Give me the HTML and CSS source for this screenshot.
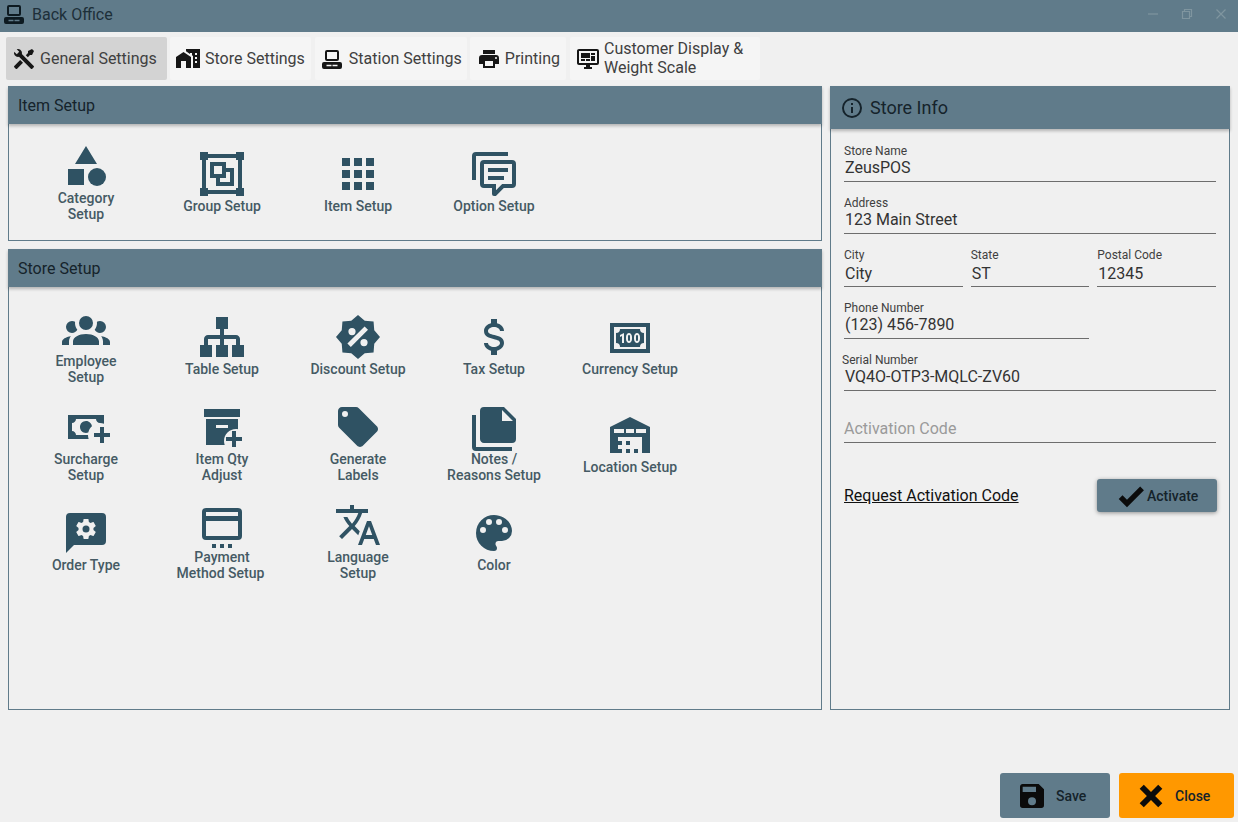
FILE: index.html
```html
<!DOCTYPE html>
<html lang="en">
<head>
<meta charset="utf-8">
<title>Back Office</title>
<link rel="stylesheet" href="styles.css">
</head>
<body>
<svg class="defs" width="0" height="0" aria-hidden="true">
  <symbol id="i-station" viewBox="0 0 24 24"><path fill-rule="evenodd" d="M7 3H17A2 2 0 0 1 19 5V12A2 2 0 0 1 17 14H7A2 2 0 0 1 5 12V5A2 2 0 0 1 7 3ZM7 5V12H17V5H7ZM4 15H20A2 2 0 0 1 22 17V20A2 2 0 0 1 20 22H4A2 2 0 0 1 2 20V17A2 2 0 0 1 4 15ZM6.5 17.7V19.3H11.5V17.7H6.5ZM12.5 17.7V19.3H17.5V17.7H12.5Z"/></symbol>
</svg>

<header class="titlebar">
  <div class="titlebar-left">
    <svg class="icon-24 title-icon"><use href="#i-station"/></svg>
    <span class="title-text">Back Office</span>
  </div>
  <div class="win-controls">
    <svg class="win-btn" viewBox="0 0 12 12"><path d="M1 6H11"/></svg>
    <svg class="win-btn" viewBox="0 0 12 12"><path d="M1.5 3.5H8.5V10.5H1.5ZM3.5 3.5V1.5H10.5V8.5H8.5"/></svg>
    <svg class="win-btn" viewBox="0 0 12 12"><path d="M1.5 1.5L10.5 10.5M10.5 1.5L1.5 10.5"/></svg>
  </div>
</header>

<nav class="tabs">
  <div class="tab tab-active">
    <svg class="icon-24" viewBox="0 0 24 24"><path d="M21.71 20.29L20.29 21.71A1 1 0 0 1 18.88 21.71L7 9.85A3.81 3.81 0 0 1 6 10A4 4 0 0 1 2.22 4.7L4.76 7.24L5.29 6.71L6.71 5.29L7.24 4.76L4.7 2.22A4 4 0 0 1 10 6A3.81 3.81 0 0 1 9.85 7L21.71 18.88A1 1 0 0 1 21.71 20.29M2.29 18.88A1 1 0 0 0 2.29 20.29L3.71 21.71A1 1 0 0 0 5.12 21.71L11 15.83L8.17 13M20 2L16 4V6L13.83 8.17L15.83 10.17L18 8H20L22 4Z"/></svg>
    <span>General Settings</span>
  </div>
  <div class="tab tab-store">
    <svg class="icon-24" viewBox="0 0 24 24"><path fill-rule="evenodd" d="M0 21V10L7.5 5L15 10V21H10V14H5V21H0ZM24 2V21H17V8.93L16 8.27V6H14V6.93L10 4.26V2H24ZM21 14H19V16H21V14ZM21 10H19V12H21V10ZM21 6H19V8H21V6Z"/></svg>
    <span>Store Settings</span>
  </div>
  <div class="tab tab-station">
    <svg class="icon-24"><use href="#i-station"/></svg>
    <span>Station Settings</span>
  </div>
  <div class="tab tab-print">
    <svg class="icon-24" viewBox="0 0 24 24"><path d="M18,3H6V7H18M19,12A1,1 0 0,1 18,11A1,1 0 0,1 19,10A1,1 0 0,1 20,11A1,1 0 0,1 19,12M16,19H8V14H16M19,8H5A3,3 0 0,0 2,11V17H6V21H18V17H22V11A3,3 0 0,0 19,8Z"/></svg>
    <span>Printing</span>
  </div>
  <div class="tab tab-display">
    <svg class="icon-24" viewBox="0 0 24 24"><path d="M21,16V4H3V16H21M21,2A2,2 0 0,1 23,4V16A2,2 0 0,1 21,18H14V20H16V22H8V20H10V18H3C1.89,18 1,17.1 1,16V4C1,2.89 1.89,2 3,2H21M5,6H14V11H5V6M15,6H19V8H15V6M19,9V14H15V9H19M5,12H9V14H5V12M10,12H14V14H10V12Z"/></svg>
    <span class="tab-two-line">Customer Display &amp;<br>Weight Scale</span>
  </div>
</nav>

<main class="content">
  <div class="left-col">
    <section class="panel panel-item">
      <h2 class="panel-head">Item Setup</h2>
      <div class="grid">
        <div class="cell">
          <svg class="icon-48" viewBox="0 0 24 24"><path d="M12 2l-5.5 9h11zM3 13.5h8v8H3z"/><circle cx="17.5" cy="17.5" r="4.5"/></svg>
          <span class="label">Category<br>Setup</span>
        </div>
        <div class="cell cell-single">
          <svg class="icon-48" viewBox="0 0 24 24"><path d="M1,1V5H2V19H1V23H5V22H19V23H23V19H22V5H23V1H19V2H5V1M5,4H19V5H20V19H19V20H5V19H4V5H5M6,6V14H9V18H18V9H14V6M8,8H12V12H8M14,11H16V16H11V14H14"/></svg>
          <span class="label">Group Setup</span>
        </div>
        <div class="cell cell-single">
          <svg class="icon-48" viewBox="0 0 24 24"><path d="M4 8h4V4H4v4zm6 12h4v-4h-4v4zm-6 0h4v-4H4v4zm0-6h4v-4H4v4zm6 0h4v-4h-4v4zm6-10v4h4V4h-4zm-6 4h4V4h-4v4zm6 6h4v-4h-4v4zm0 6h4v-4h-4v4z"/></svg>
          <span class="label">Item Setup</span>
        </div>
        <div class="cell cell-single">
          <svg class="icon-48" viewBox="0 0 24 24"><path d="M12,23A1,1 0 0,1 11,22V19H7A2,2 0 0,1 5,17V7A2,2 0 0,1 7,5H21A2,2 0 0,1 23,7V17A2,2 0 0,1 21,19H16.9L13.2,22.71C13,22.89 12.76,23 12.5,23H12M13,17V20.08L16.08,17H21V7H7V17H13M3,15H1V3A2,2 0 0,1 3,1H19V3H3V15M9,9H19V11H9V9M9,13H17V15H9V13Z"/></svg>
          <span class="label">Option Setup</span>
        </div>
      </div>
    </section>

    <section class="panel panel-store">
      <h2 class="panel-head">Store Setup</h2>
      <div class="grid">
        <div class="cell">
          <svg class="icon-48" viewBox="0 0 24 24"><path d="M12,5.5A3.5,3.5 0 0,1 15.5,9A3.5,3.5 0 0,1 12,12.5A3.5,3.5 0 0,1 8.5,9A3.5,3.5 0 0,1 12,5.5M5,8C5.56,8 6.08,8.15 6.53,8.42C6.38,9.85 6.8,11.27 7.66,12.38C7.16,13.34 6.16,14 5,14A3,3 0 0,1 2,11A3,3 0 0,1 5,8M19,8A3,3 0 0,1 22,11A3,3 0 0,1 19,14C17.84,14 16.84,13.34 16.34,12.38C17.2,11.27 17.62,9.85 17.47,8.42C17.92,8.15 18.44,8 19,8M5.5,18.25C5.5,16.18 8.41,14.5 12,14.5C15.59,14.5 18.5,16.18 18.5,18.25V20H5.5V18.25M0,20V18.5C0,17.11 1.89,15.94 4.45,15.6C3.86,16.28 3.5,17.22 3.5,18.25V20H0M24,20H20.5V18.25C20.5,17.22 20.14,16.28 19.55,15.6C22.11,15.94 24,17.11 24,18.5V20Z"/></svg>
          <span class="label">Employee<br>Setup</span>
        </div>
        <div class="cell cell-single">
          <svg class="icon-48" viewBox="0 0 24 24"><path d="M9,2V8H11V11H5C3.89,11 3,11.89 3,13V16H1V22H7V16H5V13H11V16H9V22H15V16H13V13H19V16H17V22H23V16H21V13C21,11.89 20.1,11 19,11H13V8H15V2H9Z"/></svg>
          <span class="label">Table Setup</span>
        </div>
        <div class="cell cell-single">
          <svg class="icon-48" viewBox="0 0 24 24"><path fill-rule="evenodd" d="M23 12L20.13 15.37L19.78 19.78L15.37 20.13L12 23L8.63 20.13L4.22 19.78L3.87 15.37L1 12L3.87 8.63L4.22 4.22L8.63 3.87L12 1L15.37 3.87L19.78 4.22L20.13 8.63ZM9 7.5A1.8 1.8 0 1 0 9 11.1A1.8 1.8 0 1 0 9 7.5ZM15 13A1.8 1.8 0 1 0 15 16.6A1.8 1.8 0 1 0 15 13ZM8.4 17L17 8.4L15.3 6.7L6.7 15.3Z"/></svg>
          <span class="label">Discount Setup</span>
        </div>
        <div class="cell cell-single">
          <svg class="icon-48" viewBox="0 0 24 24"><path d="M7,15H9C9,16.08 10.37,17 12,17C13.63,17 15,16.08 15,15C15,13.9 13.96,13.5 11.76,12.97C9.64,12.44 7,11.78 7,9C7,7.21 8.47,5.69 10.5,5.18V3H13.5V5.18C15.53,5.69 17,7.21 17,9H15C15,7.92 13.63,7 12,7C10.37,7 9,7.92 9,9C9,10.1 10.04,10.5 12.24,11.03C14.36,11.56 17,12.22 17,15C17,16.79 15.53,18.31 13.5,18.82V21H10.5V18.82C8.47,18.31 7,16.79 7,15Z"/></svg>
          <span class="label">Tax Setup</span>
        </div>
        <div class="cell cell-single">
          <svg class="icon-48" viewBox="0 0 24 24"><path d="M2,5H22V20H2V5M20,18V7H4V18H20M17,8A2,2 0 0,0 19,10V15A2,2 0 0,0 17,17H7A2,2 0 0,0 5,15V10A2,2 0 0,0 7,8H17M17,13V12C17,10.9 16.33,10 15.5,10C14.67,10 14,10.9 14,12V13C14,14.1 14.67,15 15.5,15C16.33,15 17,14.1 17,13M15.5,11A0.5,0.5 0 0,1 16,11.5V13.5A0.5,0.5 0 0,1 15.5,14A0.5,0.5 0 0,1 15,13.5V11.5A0.5,0.5 0 0,1 15.5,11M13,13V12C13,10.9 12.33,10 11.5,10C10.67,10 10,10.9 10,12V13C10,14.1 10.67,15 11.5,15C12.33,15 13,14.1 13,13M11.5,11A0.5,0.5 0 0,1 12,11.5V13.5A0.5,0.5 0 0,1 11.5,14A0.5,0.5 0 0,1 11,13.5V11.5A0.5,0.5 0 0,1 11.5,11M8,15H9V10L7,11V12L8,11.5V15Z"/></svg>
          <span class="label">Currency Setup</span>
        </div>

        <div class="cell">
          <svg class="icon-48" viewBox="0 0 24 24"><path d="M3 6V18H13.32C13.1 17.33 13 16.66 13 16H7C7 14.9 6.11 14 5 14V10C6.11 10 7 9.11 7 8H17C17 9.11 17.9 10 19 10V10.06C19.67 10.06 20.34 10.18 21 10.4V6H3M12 9C10.3 9.03 9 10.3 9 12S10.3 14.97 12 15C12.38 15 12.77 14.92 13.14 14.77C13.41 13.67 13.86 12.63 14.97 11.61C14.85 10.28 13.59 8.97 12 9M19 12V15H16V17H19V20H21V17H24V15H21V12H19Z"/></svg>
          <span class="label">Surcharge<br>Setup</span>
        </div>
        <div class="cell">
          <svg class="icon-48" viewBox="0 0 24 24"><path fill-rule="evenodd" d="M3 3H21V7H3V3ZM4 8H20V13.1C19.67 13.04 19.34 13 19 13C15.69 13 13 15.69 13 19C13 19.7 13.13 20.37 13.35 21H4V8ZM9 11V12.5H15V11H9Z"/><path d="M17 14H19V17H22V19H19V22H17V19H14V17H17V14Z"/></svg>
          <span class="label">Item Qty<br>Adjust</span>
        </div>
        <div class="cell">
          <svg class="icon-48" viewBox="0 0 24 24"><path d="M5.5,7A1.5,1.5 0 0,1 4,5.5A1.5,1.5 0 0,1 5.5,4A1.5,1.5 0 0,1 7,5.5A1.5,1.5 0 0,1 5.5,7M21.41,11.58L12.41,2.58C12.05,2.22 11.55,2 11,2H4C2.89,2 2,2.89 2,4V11C2,11.55 2.22,12.05 2.59,12.41L11.58,21.41C11.95,21.77 12.45,22 13,22C13.55,22 14.05,21.77 14.41,21.41L21.41,14.41C21.78,14.05 22,13.55 22,13C22,12.44 21.77,11.94 21.41,11.58Z"/></svg>
          <span class="label">Generate<br>Labels</span>
        </div>
        <div class="cell">
          <svg class="icon-48" viewBox="0 0 24 24"><path d="M16,9H21.5L16,3.5V9M7,2H17L23,8V18A2,2 0 0,1 21,20H7C5.89,20 5,19.1 5,18V4A2,2 0 0,1 7,2M3,6V22H21V24H3A2,2 0 0,1 1,22V6H3Z"/></svg>
          <span class="label">Notes /<br>Reasons Setup</span>
        </div>
        <div class="cell cell-single">
          <svg class="icon-48" viewBox="0 0 24 24"><path fill-rule="evenodd" d="M12 3L2 8V21H6V13H18V21H22V8L12 3ZM4 9V11H9V9H4ZM10 9V11H14V9H10ZM15 9V11H20V9H15Z"/><path d="M6 15H8V17H6ZM10 15H12V17H10ZM6 19H8V21H6ZM10 19H12V21H10ZM14 19H16V21H14Z"/></svg>
          <span class="label">Location Setup</span>
        </div>

        <div class="cell cell-single">
          <svg class="icon-48" viewBox="0 0 24 24"><path d="M4 2H20A2 2 0 0 1 22 4V16A2 2 0 0 1 20 18H6L2 22V4A2 2 0 0 1 4 2Z"/><g class="gear" transform="translate(6 4) scale(.5)"><path d="M19.43,12.97C19.47,12.65 19.5,12.33 19.5,12C19.5,11.67 19.47,11.34 19.43,11L21.54,9.37C21.73,9.22 21.78,8.95 21.66,8.73L19.66,5.27C19.54,5.05 19.27,4.96 19.05,5.05L16.56,6.05C16.04,5.66 15.5,5.32 14.87,5.07L14.5,2.42C14.46,2.18 14.25,2 14,2H10C9.75,2 9.54,2.18 9.5,2.42L9.13,5.07C8.5,5.32 7.96,5.66 7.44,6.05L4.95,5.05C4.73,4.96 4.46,5.05 4.34,5.27L2.34,8.73C2.21,8.95 2.27,9.22 2.46,9.37L4.57,11C4.53,11.34 4.5,11.67 4.5,12C4.5,12.33 4.53,12.65 4.57,12.97L2.46,14.63C2.27,14.78 2.21,15.05 2.34,15.27L4.34,18.73C4.46,18.95 4.73,19.03 4.95,18.95L7.44,17.94C7.96,18.34 8.5,18.68 9.13,18.93L9.5,21.58C9.54,21.82 9.75,22 10,22H14C14.25,22 14.46,21.82 14.5,21.58L14.87,18.93C15.5,18.67 16.04,18.34 16.56,17.94L19.05,18.95C19.27,19.03 19.54,18.95 19.66,18.73L21.66,15.27C21.78,15.05 21.73,14.78 21.54,14.63L19.43,12.97Z"/></g><circle cx="12" cy="10" r="1.75"/></svg>
          <span class="label">Order Type</span>
        </div>
        <div class="cell">
          <svg class="icon-48" viewBox="0 0 24 24"><path fill-rule="evenodd" d="M4 3.5H20A2 2 0 0 1 22 5.5V17.5A2 2 0 0 1 20 19.5H4A2 2 0 0 1 2 17.5V5.5A2 2 0 0 1 4 3.5ZM4 5.5V7.5H20V5.5H4ZM4 10V17.5H20V10H4ZM7 21.5H9V23.5H7V21.5ZM11 21.5H13V23.5H11V21.5ZM15 21.5H17V23.5H15V21.5Z"/></svg>
          <span class="label">Payment<br><span class="nudge">Method Setup</span></span>
        </div>
        <div class="cell">
          <svg class="icon-48" viewBox="0 0 24 24"><path d="M12.87,15.07L10.33,12.56L10.36,12.53C12.1,10.59 13.34,8.36 14.07,6H17V4H10V2H8V4H1V6H12.17C11.5,7.92 10.44,9.75 9,11.35C8.07,10.32 7.3,9.19 6.69,8H4.69C5.42,9.63 6.42,11.17 7.67,12.56L2.58,17.58L4,19L9,14L12.11,17.11L12.87,15.07M18.5,10H16.5L12,22H14L15.12,19H19.87L21,22H23L18.5,10M15.88,17L17.5,12.67L19.12,17H15.88Z"/></svg>
          <span class="label">Language<br>Setup</span>
        </div>
        <div class="cell cell-single">
          <svg class="icon-48" viewBox="0 0 24 24"><path d="M17.5,12A1.5,1.5 0 0,1 16,10.5A1.5,1.5 0 0,1 17.5,9A1.5,1.5 0 0,1 19,10.5A1.5,1.5 0 0,1 17.5,12M14.5,8A1.5,1.5 0 0,1 13,6.5A1.5,1.5 0 0,1 14.5,5A1.5,1.5 0 0,1 16,6.5A1.5,1.5 0 0,1 14.5,8M9.5,8A1.5,1.5 0 0,1 8,6.5A1.5,1.5 0 0,1 9.5,5A1.5,1.5 0 0,1 11,6.5A1.5,1.5 0 0,1 9.5,8M6.5,12A1.5,1.5 0 0,1 5,10.5A1.5,1.5 0 0,1 6.5,9A1.5,1.5 0 0,1 8,10.5A1.5,1.5 0 0,1 6.5,12M12,3A9,9 0 0,0 3,12A9,9 0 0,0 12,21A1.5,1.5 0 0,0 13.5,19.5C13.5,19.11 13.35,18.76 13.11,18.5C12.88,18.23 12.73,17.88 12.73,17.5A1.5,1.5 0 0,1 14.23,16H16A5,5 0 0,0 21,11C21,6.58 16.97,3 12,3Z"/></svg>
          <span class="label">Color</span>
        </div>
      </div>
    </section>
  </div>

  <aside class="panel panel-info">
    <h2 class="panel-head panel-head-info">
      <svg class="icon-24" viewBox="0 0 24 24"><path d="M11,9H13V7H11M12,20C7.59,20 4,16.41 4,12C4,7.59 7.59,4 12,4C16.41,4 20,7.59 20,12C20,16.41 16.41,20 12,20M12,2A10,10 0 0,0 2,12A10,10 0 0,0 12,22A10,10 0 0,0 22,12A10,10 0 0,0 12,2M11,17H13V11H11V17Z"/></svg>
      <span>Store Info</span>
    </h2>
    <div class="form">
      <div class="field"><span class="field-label">Store Name</span><span class="field-value">ZeusPOS</span></div>
      <div class="field"><span class="field-label">Address</span><span class="field-value">123 Main Street</span></div>
      <div class="field-row">
        <div class="field"><span class="field-label">City</span><span class="field-value">City</span></div>
        <div class="field"><span class="field-label">State</span><span class="field-value">ST</span></div>
        <div class="field"><span class="field-label">Postal Code</span><span class="field-value">12345</span></div>
      </div>
      <div class="field field-phone"><span class="field-label">Phone Number</span><span class="field-value">(123) 456-7890</span></div>
      <div class="field"><span class="field-label field-label-out">Serial Number</span><span class="field-value">VQ4O-OTP3-MQLC-ZV60</span></div>
      <div class="field"><span class="field-placeholder">Activation Code</span></div>
      <div class="activate-row">
        <a class="request-link" href="#">Request Activation Code</a>
        <button class="btn-activate" type="button">
          <svg class="icon-32" viewBox="0 0 24 24"><path d="M9,20.42L2.79,14.21L5.62,11.38L9,14.77L18.88,4.88L21.71,7.71L9,20.42Z"/></svg>
          <span>Activate</span>
        </button>
      </div>
    </div>
  </aside>
</main>

<footer class="footer">
  <button class="btn btn-save" type="button">
    <svg class="icon-32" viewBox="0 0 24 24"><path d="M15,9H5V5H15M12,19A3,3 0 0,1 9,16A3,3 0 0,1 12,13A3,3 0 0,1 15,16A3,3 0 0,1 12,19M17,3H5C3.89,3 3,3.9 3,5V19A2,2 0 0,0 5,21H19A2,2 0 0,0 21,19V7L17,3Z"/></svg>
    <span>Save</span>
  </button>
  <button class="btn btn-close" type="button">
    <svg class="icon-34" viewBox="0 0 24 24"><path d="M20 6.91L17.09 4L12 9.09L6.91 4L4 6.91L9.09 12L4 17.09L6.91 20L12 14.91L17.09 20L20 17.09L14.91 12L20 6.91Z"/></svg>
    <span>Close</span>
  </button>
</footer>
</body>
</html>
```

FILE: styles.css
```css
* { box-sizing: border-box; }
html, body { margin: 0; padding: 0; }
body {
  width: 1238px;
  height: 822px;
  overflow: hidden;
  background: #f0f0f0;
  font-family: Roboto, "Liberation Sans", sans-serif;
  color: #263238;
  display: flex;
  flex-direction: column;
}
.defs { position: absolute; }
svg { display: block; flex: none; fill: currentColor; }
.icon-24 { width: 24px; height: 24px; }
.icon-32 { width: 32px; height: 32px; }
.icon-34 { width: 34px; height: 34px; }
.icon-48 { width: 48px; height: 48px; }

.titlebar {
  height: 32px;
  background: #607b8a;
  display: flex;
  align-items: center;
  justify-content: space-between;
  padding: 0 11px 4px 2px;
  color: #15232b;
  flex: none;
}
.titlebar-left { display: flex; align-items: center; gap: 6px; }
.title-icon { color: #0d1a21; }
.title-text { font-size: 16px; color: #1d2f39; }
.win-controls { display: flex; gap: 22px; }
.win-btn { width: 12px; height: 12px; fill: none; stroke: #7f959f; stroke-width: 1.2; }

.tabs {
  display: flex;
  gap: 4px;
  height: 43px;
  margin: 5px 0 0 6px;
  flex: none;
}
.tab {
  display: flex;
  align-items: center;
  gap: 5px;
  background: #f5f5f5;
  font-size: 16px;
  padding: 0 6px;
  border-radius: 2px;
  color: #404040;
}
.tab svg { color: #161616; }
.tab-active { background: #d3d3d3; width: 161px; padding-right: 0; gap: 4px; }
.tab-store { margin-left: -1px; }
.tab-station { padding: 0 5px; }
.tab-print { margin-left: -1px; padding-left: 7px; gap: 4px; }
.tab-display { width: 190px; gap: 4px; }
.tab-two-line { line-height: 18.5px; }

.content {
  display: flex;
  gap: 8px;
  margin: 6px 8px 0;
  height: 624px;
  flex: none;
}
.left-col { width: 814px; display: flex; flex-direction: column; gap: 8px; }
.panel { border: 1px solid #607b8a; display: flex; flex-direction: column; }
.panel-item { height: 155px; }
.panel-store { flex: 1; }
.panel-info { width: 400px; }
.panel-head {
  margin: -1px -1px 0;
  height: 38px;
  background: #607b8a;
  font-size: 16px;
  font-weight: 400;
  color: #15232b;
  display: flex;
  align-items: center;
  padding-left: 10px;
  box-shadow: 0 2px 3px rgba(0, 0, 0, .25);
  flex: none;
}
.panel-head-info {
  height: 43px;
  font-size: 18px;
  gap: 6px;
  padding-left: 10px;
}
.grid {
  display: grid;
  grid-template-columns: repeat(5, 136px);
  grid-auto-rows: 98px;
  padding: 18px 0 0 9px;
}
.cell {
  display: flex;
  flex-direction: column;
  align-items: center;
  color: #2f5263;
}
.cell-single { padding-top: 8px; }
.gear { fill: #f0f0f0; }
.label {
  font-size: 14px;
  font-weight: 500;
  line-height: 16px;
  text-align: center;
  color: #455a64;
  white-space: nowrap;
}
.nudge { display: inline-block; padding-right: 3px; }

.form { padding: 15px 13px 0; display: flex; flex-direction: column; gap: 14px; }
.field {
  display: flex;
  flex-direction: column;
  height: 38px;
  border-bottom: 1px solid #6d6d6d;
}
.field-label { font-size: 12px; line-height: 14px; color: #3f3f3f; }
.field-label-out { margin-left: -2px; }
.field-value { font-size: 16px; line-height: 20px; padding-left: 1px; color: #333; }
.field-placeholder { font-size: 16px; line-height: 20px; color: #9a9a9a; margin-top: 14px; }
.field-row { display: grid; grid-template-columns: repeat(3, 1fr); gap: 8px; }
.field-row .field { height: 39px; }
.field-row .field-value { margin-top: 2px; }
.field-phone { width: 245px; }
.activate-row {
  display: flex;
  align-items: center;
  justify-content: space-between;
  margin-top: 22px;
  margin-right: -1px;
}
.request-link { font-size: 16px; color: #111; text-decoration: underline; }
.btn-activate {
  width: 120px;
  height: 33px;
  background: #607b8a;
  border: 0;
  border-radius: 3px;
  box-shadow: 0 1px 4px rgba(0, 0, 0, .4);
  display: flex;
  align-items: center;
  padding: 0 0 0 18px;
  font: 500 14px Roboto, sans-serif;
  color: #15232b;
}
.btn-activate svg { color: #0b0b0b; }

.footer {
  display: flex;
  justify-content: flex-end;
  gap: 9px;
  margin-top: 63px;
  padding-right: 4px;
  flex: none;
}
.btn {
  height: 45px;
  border: 0;
  border-radius: 3px;
  display: flex;
  align-items: center;
  font: 500 14px Roboto, sans-serif;
  color: #15232b;
  padding: 0;
}
.btn svg { color: #0b0b0b; }
.btn-save { width: 110px; background: #607b8a; padding-left: 16px; gap: 8px; }
.btn-close { width: 115px; background: #ff9800; padding-left: 15px; gap: 7px; }
```
